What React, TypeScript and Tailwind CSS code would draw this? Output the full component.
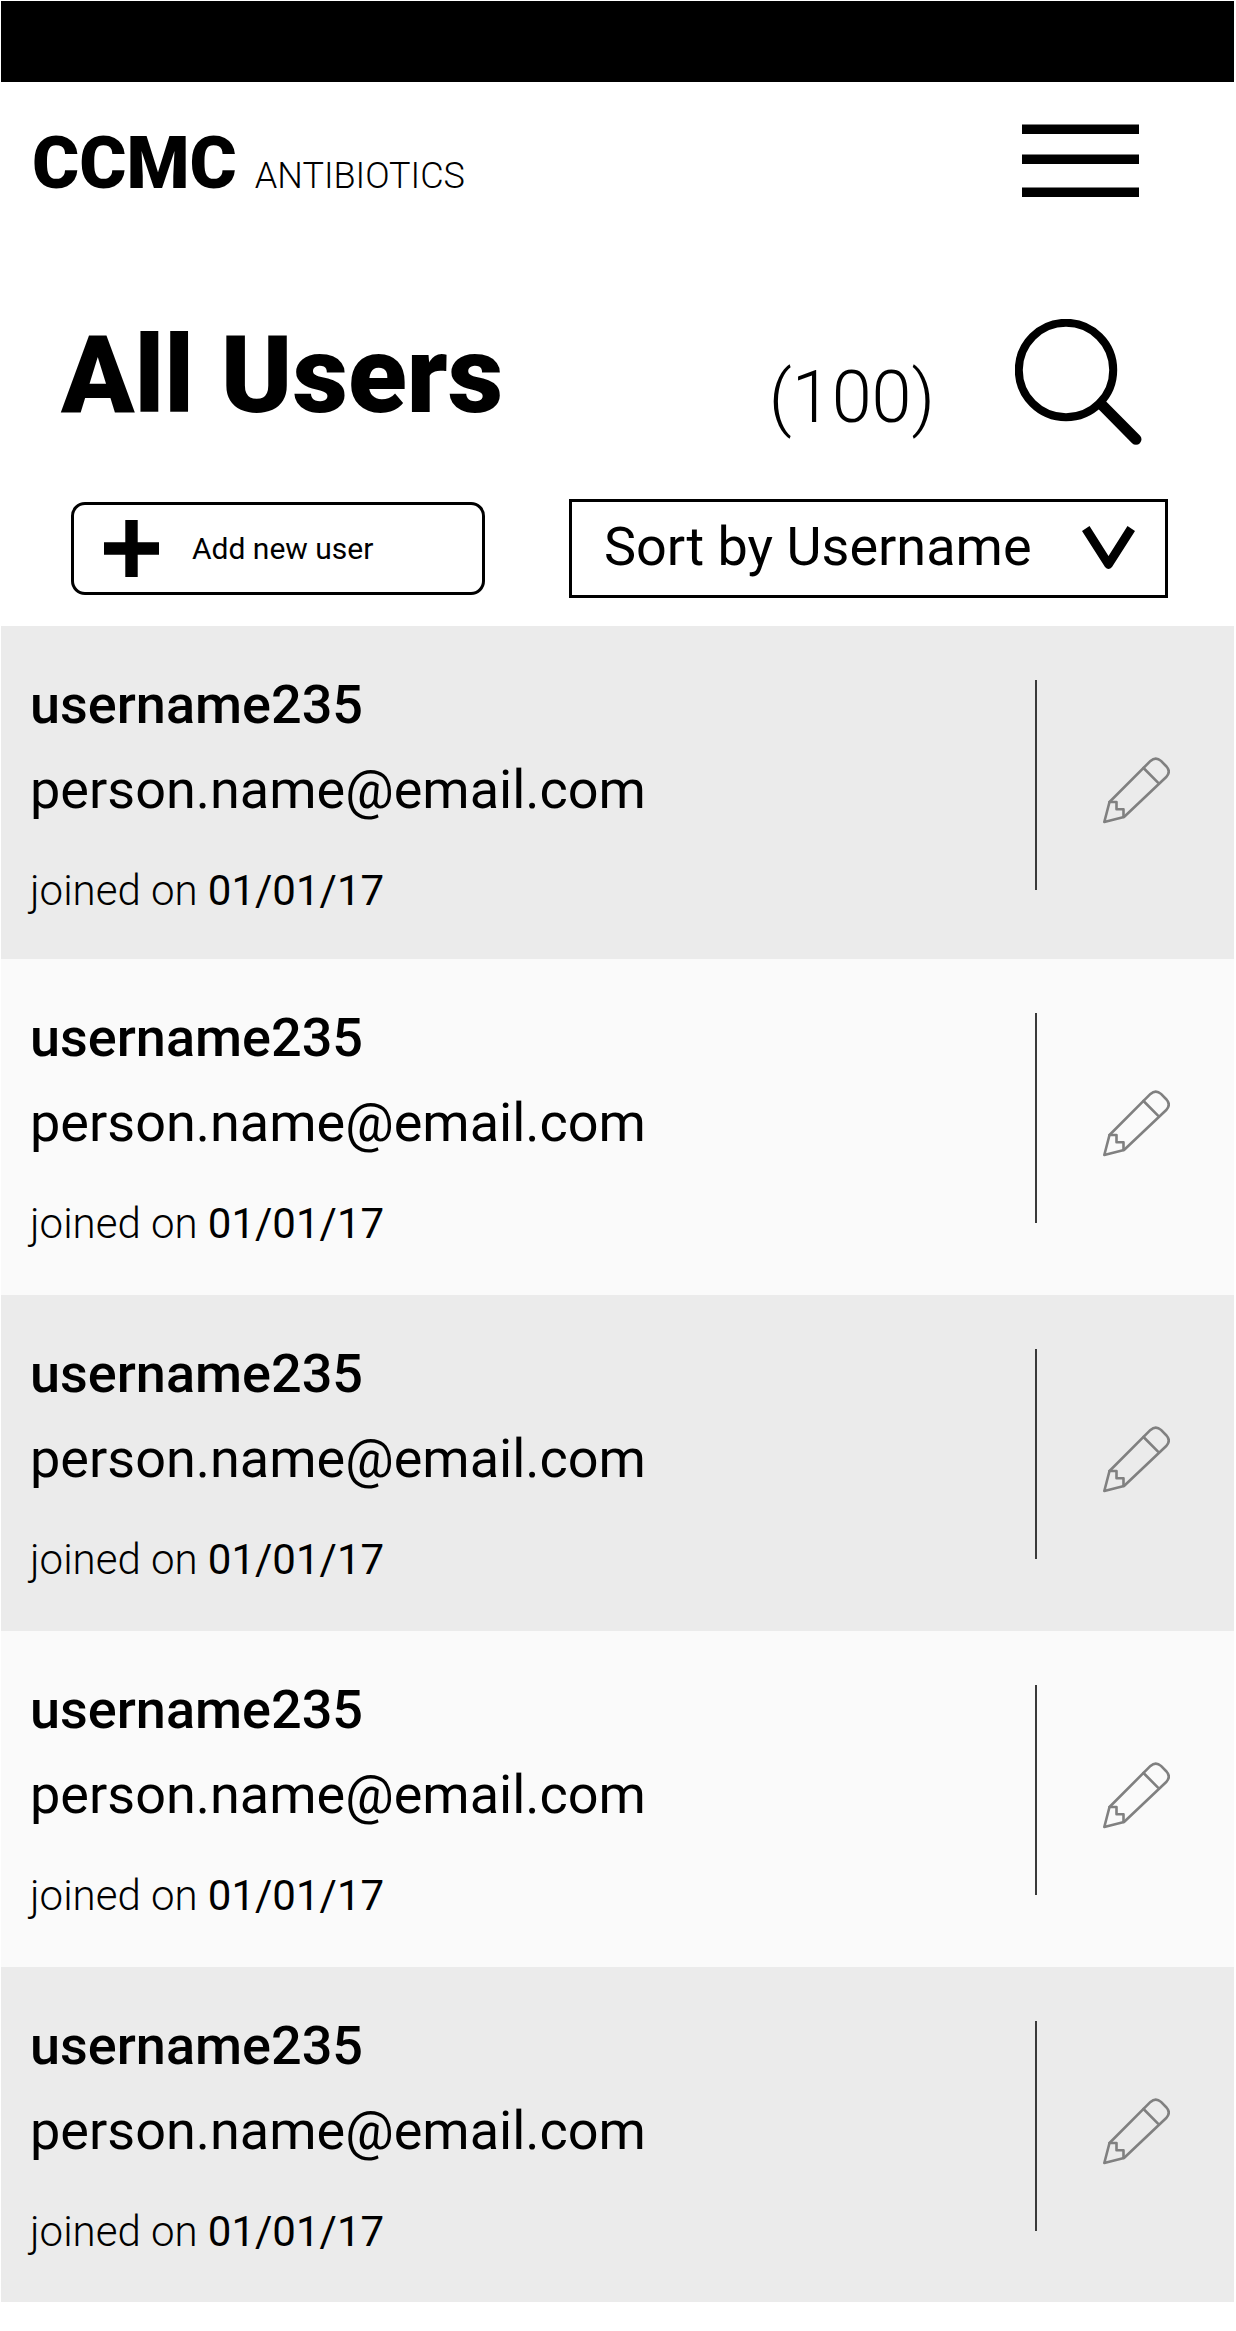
const users = Array.from({ length: 5 }, (_, index) => ({
  id: index,
  name: "username235",
  email: "person.name@email.com",
  joined: "01/01/17",
}));

function MenuIcon() {
  return (
    <svg width="117" height="73" viewBox="0 0 117 73" aria-hidden="true">
      <path d="M0 .6h117v9.300H0zM0 30.600h117v9.300H0zM0 63.600h117v9.300H0z" />
    </svg>
  );
}

function SearchIcon() {
  return (
    <svg width="128" height="127" viewBox="0 0 128 127" fill="none" stroke="black" aria-hidden="true">
      <circle cx="51" cy="51" r="47.2" strokeWidth="8" />
      <path d="M86 85l35 35.300" strokeWidth="11" strokeLinecap="round" />
    </svg>
  );
}

function PlusIcon() {
  return (
    <svg width="55" height="57" viewBox="0 0 55 57" aria-hidden="true">
      <path d="M21.300 0h12.400v22.300H55v12.400H33.700V57H21.300V34.700H0V22.300h21.300z" />
    </svg>
  );
}

function PencilIcon() {
  return (
    <svg
      width="68"
      height="68"
      viewBox="0 0 68 68"
      fill="none"
      stroke="#808080"
      strokeWidth="2.6"
      strokeLinejoin="round"
      strokeLinecap="round"
      aria-hidden="true"
    >
      <path d="M2.300 66l5.200-20L48.500 4.900q5.300-4.600 10.500 0l5.500 5.600q4.500 5 0 10.200L22 61z" />
      <path d="M41.500 12l14.500 14.600M7.500 46h7v7.300h7V61" />
    </svg>
  );
}

export default function App() {
  return (
    <div className="min-h-screen bg-white pt-px pr-[2px] pl-px font-['Roboto',sans-serif] text-black">
      <div className="h-[81px] bg-black" />

      <header className="flex items-start justify-between pt-[42px] pr-[95px] pl-[31px]">
        <a href="#" className="mt-1 flex items-baseline gap-[18px] leading-none">
          <span className="text-[72px] font-black">CCMC</span>
          <span className="text-4xl leading-none font-light">ANTIBIOTICS</span>
        </a>
        <button type="button" aria-label="Menu">
          <MenuIcon />
        </button>
      </header>

      <main>
        <div className="mt-[119px] flex items-start pr-[91px] pl-[60px]">
          <h1 className="mt-[2px] flex-1 text-[108px] leading-none font-black">All Users</h1>
          <p className="mt-[43px] text-[72px] leading-none font-light">(100)</p>
          <button type="button" aria-label="Search" className="ml-20">
            <SearchIcon />
          </button>
        </div>

        <div className="mt-[53px] flex items-center justify-between pr-[66px] pl-[70px]">
          <button
            type="button"
            className="flex h-[93px] w-[414px] items-center gap-[33px] rounded-[14px] border-3 border-black pl-[30px] text-3xl leading-none"
          >
            <PlusIcon />
            Add new user
          </button>
          <div className="relative">
            <select
              aria-label="Sort users"
              className="h-[99px] w-[599px] appearance-none border-3 border-black bg-white pb-1 pl-8 text-[54px]"
            >
              <option>Sort by Username</option>
              <option>Sort by Email</option>
              <option>Sort by Date</option>
            </select>
            <svg
              className="pointer-events-none absolute top-[27px] right-[33px]"
              width="53"
              height="43"
              viewBox="0 0 53 43"
              aria-hidden="true"
            >
              <path d="M0 5L7.500 0 26.500 30 45.500 0 53 5 30 41q-3.500 4-7 0z" />
            </svg>
          </div>
        </div>

        <ul className="mt-7">
          {users.map((user) => (
            <li
              key={user.id}
              className="flex items-start justify-between bg-[#fafafa] pt-[52px] pr-16 pb-[50px] pl-[29px] first:pb-[47px] last:pb-[49px] odd:bg-[#ebebeb]"
            >
              <div>
                <h2 className="text-[54px] leading-none font-medium">{user.name}</h2>
                <p className="mt-[31px] text-[54px] leading-none">{user.email}</p>
                <p className="mt-[53px] text-[42px] leading-none font-light">
                  joined on <time className="font-normal">{user.joined}</time>
                </p>
              </div>
              <div className="mt-[2px] flex h-[210px] items-start border-l-2 border-[#3a3a3a] pt-[76px] pl-[65px]">
                <button type="button" aria-label={`Edit ${user.name}`}>
                  <PencilIcon />
                </button>
              </div>
            </li>
          ))}
        </ul>
      </main>
    </div>
  );
}
